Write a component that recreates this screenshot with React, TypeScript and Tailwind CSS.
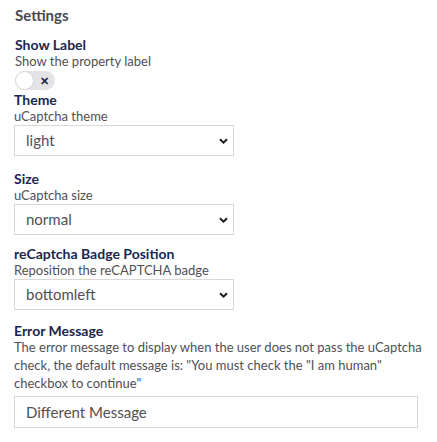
import React from "react";

function Chevron() {
  return (
    <svg width="9" height="6" viewBox="0 0 9 6" className="shrink-0">
      <path d="M1 1.2 L4.5 4.6 L8 1.2" fill="none" stroke="#1b1b1b" strokeWidth="2" />
    </svg>
  );
}

function Field({ label, desc, gap, children }: { label: string; desc: string; gap: string; children: React.ReactNode }) {
  return (
    <div className={gap}>
      <div className="text-[14px] font-bold leading-[15px] text-[#1b264f]">{label}</div>
      <div className="text-[13px] leading-[18px] text-[#515054]">{desc}</div>
      {children}
    </div>
  );
}

function Select({ value }: { value: string }) {
  return (
    <div className="flex h-[31px] w-[220px] items-center justify-between border border-[#d8d7d9] bg-white pl-[11px] pr-[5px] text-[15px] text-[#515054]">
      <span>{value}</span>
      <Chevron />
    </div>
  );
}

export default function App() {
  return (
    <div className="min-h-screen bg-white px-[14px] pt-[5px] font-['Lato',sans-serif]">
      <div className="mb-[12px] pl-px text-[15px] font-bold leading-[20px] text-[#4a4a4f]">Settings</div>

      <div className="mb-[2px]">
        <div className="pl-px text-[14px] font-bold leading-[15px] text-[#1b264f]">Show Label</div>
        <div className="pl-px text-[13px] leading-[18px] text-[#515054]">Show the property label</div>
        <div className="ml-px mt-px flex h-[19px] w-[40px] items-center rounded-full bg-[#e4e4e6]">
          <div className="h-[19px] w-[19px] rounded-full border border-[#d8d7d9] bg-white" />
          <span className="ml-[6px] text-[11px] font-bold leading-none text-[#1b264f]">✕</span>
        </div>
      </div>

      <Field label="Theme" desc="uCaptcha theme" gap="mb-[15px]">
        <Select value="light" />
      </Field>

      <Field label="Size" desc="uCaptcha size" gap="mb-[11px]">
        <Select value="normal" />
      </Field>

      <Field label="reCaptcha Badge Position" desc="Reposition the reCAPTCHA badge" gap="mb-[13px]">
        <Select value="bottomleft" />
      </Field>

      <div>
        <div className="text-[14px] font-bold leading-[15px] text-[#1b264f]">Error Message</div>
        <div className="w-[412px] text-[13px] leading-[18px] text-[#515054]">
          The error message to display when the user does not pass the uCaptcha check, the default message is: "You must check the "I am human" checkbox to continue"
        </div>
        <div className="mt-[4px] flex h-[32px] w-[404px] items-center border border-[#d8d7d9] pl-[11px] text-[15px] text-[#515054]">
          Different Message
        </div>
      </div>
    </div>
  );
}
